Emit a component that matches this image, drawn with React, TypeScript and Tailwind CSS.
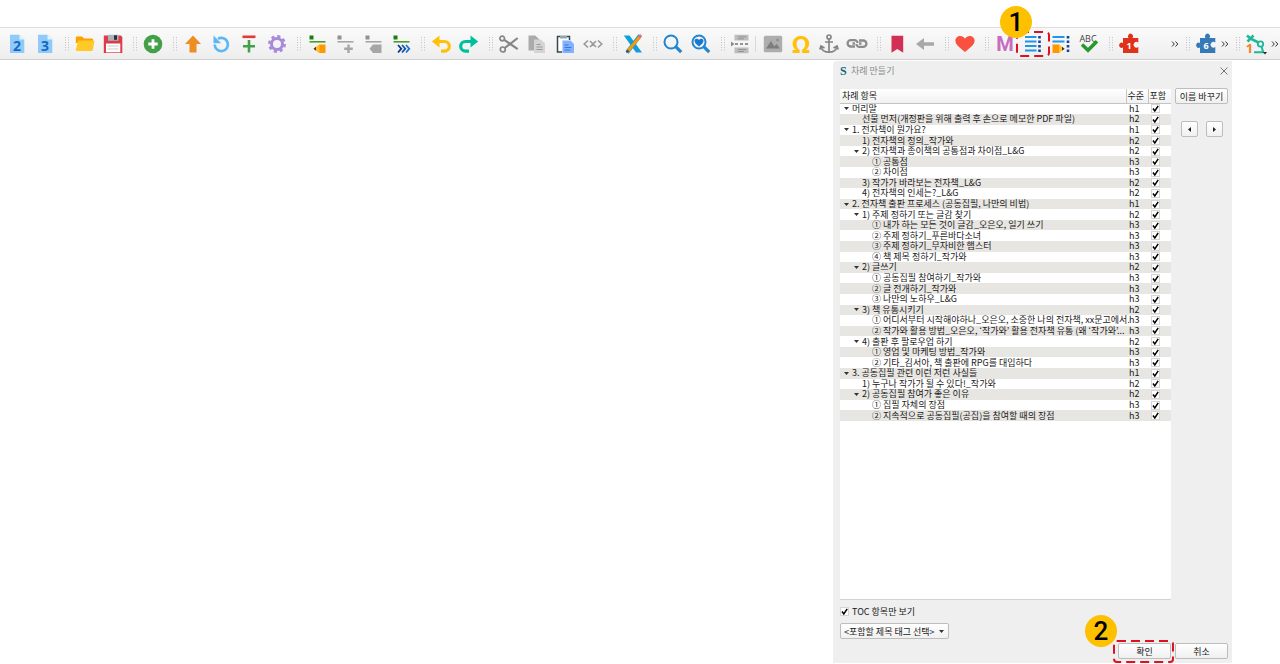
import type { ReactNode } from "react";

type Level = 1 | 2 | 3;

interface TocEntry {
  level: Level;
  text: string;
  open?: boolean;
}

const entries: TocEntry[] = [
  { level: 1, text: "머리말", open: true },
  { level: 2, text: "선물 먼저(개정판을 위해 출력 후 손으로 메모한 PDF 파일)" },
  { level: 1, text: "1. 전자책이 뭔가요?", open: true },
  { level: 2, text: "1) 전자책의 정의_작가와" },
  { level: 2, text: "2) 전자책과 종이책의 공통점과 차이점_L&G", open: true },
  { level: 3, text: "① 공통점" },
  { level: 3, text: "② 차이점" },
  { level: 2, text: "3) 작가가 바라보는 전자책_L&G" },
  { level: 2, text: "4) 전자책의 인세는?_L&G" },
  { level: 1, text: "2. 전자책 출판 프로세스 (공동집필, 나만의 비법)", open: true },
  { level: 2, text: "1) 주제 정하기 또는 글감 찾기", open: true },
  { level: 3, text: "① 내가 하는 모든 것이 글감_오은오, 일기 쓰기" },
  { level: 3, text: "② 주제 정하기_푸른바다소녀" },
  { level: 3, text: "③ 주제 정하기_무자비한 햄스터" },
  { level: 3, text: "④ 책 제목 정하기_작가와" },
  { level: 2, text: "2) 글쓰기", open: true },
  { level: 3, text: "① 공동집필 참여하기_작가와" },
  { level: 3, text: "② 글 전개하기_작가와" },
  { level: 3, text: "③ 나만의 노하우_L&G" },
  { level: 2, text: "3) 책 유통시키기", open: true },
  { level: 3, text: "① 어디서부터 시작해야하나_오은오, 소중한 나의 전자책, xx문고에서..." },
  { level: 3, text: "② 작가와 활용 방법_오은오, ‘작가와’ 활용 전자책 유통 (왜 ‘작가와’..." },
  { level: 2, text: "4) 출판 후 팔로우업 하기", open: true },
  { level: 3, text: "① 영업 및 마케팅 방법_작가와" },
  { level: 3, text: "② 기타_김서아, 책 출판에 RPG를 대입하다" },
  { level: 1, text: "3. 공동집필 관련 이런 저런 사실들", open: true },
  { level: 2, text: "1) 누구나 작가가 될 수 있다!_작가와" },
  { level: 2, text: "2) 공동집필 참여가 좋은 이유", open: true },
  { level: 3, text: "① 집필 자체의 장점" },
  { level: 3, text: "② 지속적으로 공동집필(공집)을 참여할 때의 장점" },
];

const indent: Record<Level, string> = {
  1: "pl-px",
  2: "pl-[11px]",
  3: "pl-[21px]",
};

function Icon({ children }: { children: ReactNode }) {
  return (
    <svg viewBox="0 0 20 20" className="h-5 w-5 shrink-0 overflow-visible" fill="none" aria-hidden="true">
      {children}
    </svg>
  );
}

function Tool({ label, children }: { label: string; children: ReactNode }) {
  return (
    <button type="button" aria-label={label} className="flex h-7 w-7 shrink-0 items-center justify-center">
      <Icon>{children}</Icon>
    </button>
  );
}

function Handle() {
  return (
    <svg viewBox="0 0 12 14" className="h-3.5 w-3 shrink-0" aria-hidden="true">
      <path d="M6.500 0V14M9.500 0V14" stroke="#c4c4c4" strokeDasharray="1 1.500" />
    </svg>
  );
}

function More() {
  return (
    <button type="button" aria-label="더 보기" className="flex h-7 w-[10px] shrink-0 items-center justify-center">
      <svg viewBox="0 0 8 8" className="h-2 w-2" fill="none" stroke="#333" aria-hidden="true">
        <path d="m1 1.500 2.300 2.500L1 6.500M4.500 1.500 6.800 4 4.500 6.500" />
      </svg>
    </button>
  );
}

function NumberedFile({ n }: { n: number }) {
  return (
    <>
      <path d="M3 .7h9.500L17.300 5.500V19H3z" fill="#90caf9" />
      <path d="M12.500.7v4.800h4.800z" fill="#e1f5fe" />
      <text x="10" y="16.500" textAnchor="middle" fontSize="14" fontWeight="700" fill="#1368c4" className="font-['Open_Sans',sans-serif]">
        {n}
      </text>
    </>
  );
}

function Puzzle({ n, color }: { n: number; color: string }) {
  return (
    <>
      <path
        d="M4 4H9.500A2.600 2.600 0 1 1 13.500 4H19.300V8.500A2.900 2.900 0 1 0 19.300 13V19H4V13.500A2.600 2.600 0 1 1 4 9z"
        fill={color}
      />
      <text x="10" y="14.500" textAnchor="middle" fontSize="9" fontWeight="700" fill="#fff" className="font-['Open_Sans',sans-serif]">
        {n}
      </text>
    </>
  );
}

function DashedFrame() {
  return (
    <svg className="h-full w-full overflow-visible" fill="none" aria-hidden="true">
      <rect width="100%" height="100%" rx="3" stroke="#e0101c" strokeWidth="2" strokeDasharray="9 5" />
    </svg>
  );
}

function Badge({ n }: { n: number }) {
  return (
    <span className="flex h-8 w-8 items-center justify-center rounded-full bg-[#ffc000] font-[Roboto,sans-serif] text-[26px] leading-none font-medium text-black">
      {n}
    </span>
  );
}

function Toolbar() {
  return (
    <div
      role="toolbar"
      className="flex h-[33px] items-center border-t border-b border-t-[#dedede] border-b-[#cfcfcf] bg-linear-to-b from-[#fafafa] to-[#eeeeee] pl-[3px]"
    >
      <Tool label="제목 2"><NumberedFile n={2} /></Tool>
      <Tool label="제목 3"><NumberedFile n={3} /></Tool>
      <Handle />
      <Tool label="열기">
        <path d="M.8 3.500Q.8 2.500 1.800 2.500H7l2 2h8q1 0 1 1V9H.8z" fill="#ffa000" />
        <path d="M.8 15.500 3 7.500q.3-1 1.300-1h14q1.400 0 1.100 1l-1.600 8.500q-.2 1-1.200 1H1.800q-1 0-1-1.500z" fill="#ffca28" />
      </Tool>
      <Tool label="저장">
        <path d="M.8 1.500h17l1.500 1.500v16H.8z" fill="#dd3b48" />
        <path d="M5 .8h10.500v6H5z" fill="#a9b3b8" />
        <path d="M11 1.300h3v4.500h-3z" fill="#263238" />
        <path d="M3 9.500h14.300v8.800H3z" fill="#fff" />
        <path d="M4.500 12h11M4.500 15h11" stroke="#ccc" />
      </Tool>
      <Handle />
      <Tool label="추가">
        <circle cx="10" cy="10" r="9.300" fill="#43a047" />
        <path d="M10 5.300v9.400M5.300 10h9.400" stroke="#fff" strokeWidth="2.800" />
      </Tool>
      <Handle />
      <Tool label="위로">
        <path d="M10 1.500 18 10h-4.500v8.500h-7V10H2z" fill="#ef8e20" />
      </Tool>
      <Tool label="새로 고침">
        <path d="M7 4.800A6.600 6.600 0 1 1 3.700 10.500" stroke="#5cb8f5" strokeWidth="2.700" />
        <path d="M2.500 1.500v7.700h7.700z" fill="#5cb8f5" />
      </Tool>
      <Tool label="나누기">
        <path d="M3.500 2.800h13" stroke="#e53935" strokeWidth="2.600" />
        <path d="M10 6v12.500M4 12.300h12" stroke="#43a047" strokeWidth="2.600" />
      </Tool>
      <Tool label="설정">
        <circle cx="10" cy="10" r="5.500" stroke="#a78bda" strokeWidth="3" />
        <circle cx="10" cy="10" r="7.700" stroke="#a78bda" strokeWidth="2.500" strokeDasharray="3.200 2.847" />
      </Tool>
      <Handle />
      <Tool label="줄 편집">
        <path d="M2.500 1.500h4v4h-4z" fill="#1b7a1b" />
        <path d="M2.500 7.800h16" stroke="#43a020" strokeWidth="1.600" />
        <path d="M6.500 14.700 12 10.500h1V19h-1z" fill="#fbc02d" />
        <path d="M12.500 10.500h6V19h-6z" fill="#ff9800" />
        <path d="m6.500 14.700 2.500-2v4z" fill="#4e342e" />
      </Tool>
      <Tool label="줄 추가">
        <path d="M2.500 1.500h4v4h-4z" fill="#919191" />
        <path d="M2.500 7.800h16" stroke="#a6a6a6" strokeWidth="1.600" />
        <path d="M13.500 10.500V19M9.200 14.700h8.600" stroke="#a6a6a6" strokeWidth="2.400" />
      </Tool>
      <Tool label="줄 삭제">
        <path d="M2.500 1.500h4v4h-4z" fill="#919191" />
        <path d="M2.500 7.800h16" stroke="#a6a6a6" strokeWidth="1.600" />
        <path d="M10 10.500h8.500V19H10l-3.500-4.300z" fill="#a6a6a6" />
      </Tool>
      <Tool label="줄 이동">
        <path d="M2.500 1.500h4v4h-4z" fill="#1b7a1b" />
        <path d="M2.500 7.800h16" stroke="#43a020" strokeWidth="1.600" />
        <path d="m7 11 3.300 3.700L7 18.500" stroke="#0d3a8c" strokeWidth="1.800" />
        <path d="m11 11 3.300 3.700-3.300 3.800" stroke="#1155b0" strokeWidth="1.800" />
        <path d="m15 11 3.300 3.700-3.300 3.800" stroke="#1976d2" strokeWidth="1.800" />
      </Tool>
      <Handle />
      <Tool label="실행 취소">
        <path d="M7 7.500h6.500a4.300 4.300 0 0 1 0 9.600H10" stroke="#ffc107" strokeWidth="3.200" />
        <path d="M.8 7.500 8.500 1.500v12z" fill="#ffc107" />
      </Tool>
      <Tool label="다시 실행">
        <path d="M13 7.500H6.500a4.300 4.300 0 0 0 0 9.600H10" stroke="#00bf9c" strokeWidth="3.200" />
        <path d="m19.200 7.500-7.700-6v12z" fill="#00bf9c" />
      </Tool>
      <Handle />
      <Tool label="잘라내기">
        <g stroke="#858585" strokeWidth="1.700">
          <circle cx="3.200" cy="4.500" r="2.300" />
          <circle cx="3.800" cy="15.500" r="2.500" />
          <path d="m5.200 5.800 13.500 9.400M5.800 14 18.700 4" strokeWidth="2.200" />
        </g>
      </Tool>
      <Tool label="복사">
        <path d="M1.500 1.500h6.700L12 5v11.500H1.500z" fill="#ababab" />
        <path d="M7 5.500h7l4 4V19H7z" fill="#d4d4d4" />
        <path d="M9.500 10.500h4M9.500 13h6M9.500 15.500h6" stroke="#999" />
      </Tool>
      <Tool label="붙여넣기">
        <path d="M2.500 2.500h12v15.500h-12z" fill="#fff" />
        <path d="M5 2.500H2.500v15.500H7M12 2.500h2.500V6" stroke="#37474f" strokeWidth="1.500" />
        <path d="M5 1.500h7v3H5z" fill="#90a4ae" />
        <path d="M7.500 6.500h8l3.500 3.500v9H7.500z" fill="#82b1ff" />
        <path d="M9.500 11h4M9.500 13.500h7M9.500 16h6" stroke="#3478db" />
      </Tool>
      <Tool label="태그 지우기">
        <path d="M5 6.500 1.200 10 5 13.500M15 6.500l3.800 3.500-3.800 3.500M7 7l6 6M13 7l-6 6" stroke="#999" strokeWidth="1.600" />
      </Tool>
      <Handle />
      <Tool label="외부 편집기">
        <path d="M.8 1.500H6.500L19 18.500H13z" fill="#0f9fdb" />
        <path d="M17 1.500 4 18.500" stroke="#0f9fdb" strokeWidth="4" />
        <path d="M16.500 3 5 17" stroke="#ff9800" strokeWidth="2.800" />
        <path d="m15.800 3.800 2.300-2.800" stroke="#e57373" strokeWidth="3" />
        <path d="m3 19 1-3.500 2.500 1.700z" fill="#5d4037" />
      </Tool>
      <Handle />
      <Tool label="찾기">
        <circle cx="8" cy="8" r="6.500" stroke="#2086d1" strokeWidth="2" />
        <path d="m12.700 12.700 5.500 5.500" stroke="#2086d1" strokeWidth="3.200" />
      </Tool>
      <Tool label="즐겨 찾기 검색">
        <circle cx="8" cy="8" r="6.500" stroke="#2086d1" strokeWidth="2" />
        <path d="m12.700 12.700 5.500 5.500" stroke="#2086d1" strokeWidth="3.200" />
        <path d="M8 12.500C5 10 3.500 8.700 3.500 6.800c0-2.400 3.200-3 4.500-.8C9.300 3.800 12.500 4.400 12.500 6.800c0 1.900-1.500 3.200-4.500 5.700z" fill="#1976d2" />
      </Tool>
      <Handle />
      <Tool label="분할 표시">
        <path d="M3.500.8h14v5.700h-14zM3.500 13.500h14v5.700h-14z" fill="#bdbdbd" />
        <path d="M7 2.800h8M7 4.800h6M7 15.500h8M7 17.500h6" stroke="#8a8a8a" strokeWidth=".8" />
        <path d="M4 10h15" stroke="#757575" strokeWidth="1.500" strokeDasharray="3 2" />
        <path d="M0 7.500 3.500 10 0 12.500z" fill="#8a8a8a" />
      </Tool>
      <span className="mr-[3px] h-4 w-px bg-[#dadada]" />
      <Tool label="그림">
        <rect x=".8" y="1.800" width="18.400" height="16.400" rx="1.500" fill="#adadad" />
        <path d="m3 14.500 5-7.500 4.500 7.500zM9.500 14.500l4-4.500 3.500 4.500z" fill="#7d7d7d" />
        <circle cx="14.500" cy="6" r="1.300" fill="#8a8a8a" />
      </Tool>
      <Tool label="특수 문자">
        <text x="10" y="19" textAnchor="middle" fontSize="24" fontWeight="700" fill="#ffc107" className="font-['Noto_Sans',sans-serif]">
          Ω
        </text>
      </Tool>
      <Tool label="앵커">
        <g stroke="#858585" strokeWidth="1.700">
          <circle cx="10" cy="3" r="2" />
          <path d="M10 5v13M6 8h8M2 13c1 3.500 4.500 5.200 8 5.200s7-1.700 8-5.200M.8 15.500 2 12l3.500 2M19.200 15.500 18 12l-3.500 2" />
        </g>
      </Tool>
      <Tool label="링크">
        <path d="M8 12.500H3.800a3.200 3.200 0 0 1 0-6.400H7.500a3 3 0 0 1 3 3" stroke="#8c8c8c" strokeWidth="2.300" />
        <path d="M12 6.500h4.200a3.200 3.200 0 0 1 0 6.400H12.500a3 3 0 0 1-3-3M5.500 9.500h2.500M12 9.500h2.500" stroke="#8c8c8c" strokeWidth="2.300" />
      </Tool>
      <Handle />
      <Tool label="책갈피">
        <path d="M4.500 1.800h11.700v17L10.300 15l-5.800 3.800z" fill="#d32f54" />
      </Tool>
      <Tool label="뒤로">
        <path d="M1 10 9 4v4.200h10v3.600H9V16z" fill="#a8a8a8" />
      </Tool>
      <Handle />
      <Tool label="후원">
        <path d="M10 18C3 12.500.4 9.800.4 6.500.4 1.500 7.500 0 10 4.800 12.500 0 19.600 1.500 19.600 6.500 19.600 9.800 17 12.500 10 18z" fill="#f9503f" />
      </Tool>
      <Handle />
      <Tool label="메타데이터">
        <text x="10" y="17" textAnchor="middle" fontSize="20" fontWeight="700" fill="#c76dc0" className="font-[Roboto,sans-serif]">
          M
        </text>
      </Tool>
      <div className="relative shrink-0">
        <Tool label="차례 만들기">
          <path d="M2 3h11.500M2 7.500h11.500M2 12h11.500M2 16.500h11.500" stroke="#2196e8" strokeWidth="2" />
          <path d="M16.500 2v16.500" stroke="#0d47a1" strokeWidth="2.600" strokeDasharray="2.500 2" />
        </Tool>
        <div className="pointer-events-none absolute -inset-x-0.5 inset-y-0.5">
          <DashedFrame />
        </div>
        <div className="pointer-events-none absolute -top-6 -left-[19px]">
          <Badge n={1} />
        </div>
      </div>
      <Tool label="차례 편집">
        <path d="M1.500 3h12M1.500 7.500h12" stroke="#2196e8" strokeWidth="2" />
        <path d="M1.500 10.500h7V19h-7z" fill="#ff9800" />
        <path d="M8 10.500 13.500 14.700 8 19z" fill="#ffc52e" />
        <path d="m11 12.800 2.700 1.900-2.700 2z" fill="#4e342e" />
        <path d="M17 2v16.500" stroke="#0d47a1" strokeWidth="2.600" strokeDasharray="2.500 2" />
      </Tool>
      <Tool label="맞춤법 검사">
        <text x="9" y="7.500" textAnchor="middle" fontSize="9" fill="#444" className="font-['Open_Sans',sans-serif]">
          ABC
        </text>
        <path d="m3 10.500 6 5.700 9-9" stroke="#25992a" strokeWidth="3.500" />
      </Tool>
      <Handle />
      <div className="flex flex-1 justify-between">
        <Tool label="플러그인 1"><Puzzle n={1} color="#df321b" /></Tool>
        <More />
      </div>
      <Handle />
      <Tool label="플러그인 6"><Puzzle n={6} color="#3579b7" /></Tool>
      <More />
      <Handle />
      <Tool label="자동화">
        <g stroke="#1db89a" strokeWidth="1.800">
          <path d="M1 1.500 4.500 4.500 7.500 1.500M1.500 7.500 4.500 4.500 12.500 8.500" strokeWidth="2.600" />
          <circle cx="14.500" cy="10" r="2.700" />
          <path d="m15.500 12.500 1.500 5M8 18.300h10" strokeWidth="2" />
        </g>
        <text x="3.500" y="19" textAnchor="middle" fontSize="13" fontWeight="700" fill="#f5821f" className="font-['Open_Sans',sans-serif]">
          1
        </text>
        <path d="M17 18h4l-2 2.500z" fill="#222" />
      </Tool>
      <More />
    </div>
  );
}

function Check({ label, id }: { label?: string; id?: string }) {
  return (
    <span className="grid h-[9px] w-[9px]">
      <input
        id={id}
        type="checkbox"
        defaultChecked
        aria-label={label}
        className="peer col-start-1 row-start-1 h-[9px] w-[9px] appearance-none border border-[#d5d5d5] bg-white"
      />
      <svg
        viewBox="0 0 9 9"
        className="pointer-events-none col-start-1 row-start-1 hidden h-[9px] w-[9px] peer-checked:block"
        fill="none"
        aria-hidden="true"
      >
        <path d="M2 4.500 3.800 7 7.200 1.800" stroke="#000" strokeWidth="1.500" />
      </svg>
    </span>
  );
}

const buttonClass =
  "flex h-4 items-center justify-center rounded-[2px] border border-[#bdbdbd] bg-linear-to-b from-white to-[#f0f0f0] whitespace-nowrap";

function TocTable() {
  return (
    <table className="h-[332px] w-full table-fixed border-collapse text-left leading-[10px]">
      <thead>
        <tr className="h-[14px] bg-linear-to-b from-white to-[#f1f1f1]">
          <th scope="col" className="border-b border-[#c4c4c4] p-0 pl-0.5 font-normal">차례 항목</th>
          <th scope="col" className="w-[22px] border-b border-l border-[#c4c4c4] p-0 pl-px font-normal whitespace-nowrap">수준</th>
          <th scope="col" className="w-[23px] border-b border-l border-[#c4c4c4] p-0 pl-px font-normal whitespace-nowrap">포함</th>
        </tr>
      </thead>
      <tbody>
        {entries.map((entry) => (
          <tr key={entry.text} className="even:bg-[#e8e6e2]">
            <td className="p-0">
              <div className={`-mr-[3px] flex h-[10px] items-center ${indent[entry.level]}`}>
                <span className="flex w-[11px] shrink-0 justify-center">
                  {entry.open && (
                    <svg viewBox="0 0 5 3" className="h-[3px] w-[5px]" aria-hidden="true">
                      <path d="M0 0h5L2.500 3z" fill="#333" />
                    </svg>
                  )}
                </span>
                <span className="min-w-0 overflow-hidden leading-[14px] whitespace-nowrap">{entry.text}</span>
              </div>
            </td>
            <td className="p-0 pl-[3px]">
              <div className="h-[10px]">h{entry.level}</div>
            </td>
            <td className="p-0 pl-[3px]">
              <Check label={`${entry.text} 포함`} />
            </td>
          </tr>
        ))}
      </tbody>
    </table>
  );
}

function TocDialog() {
  return (
    <section
      role="dialog"
      aria-labelledby="toc-title"
      className="mt-px mr-12 mb-px ml-auto flex w-[399px] max-w-full flex-1 flex-col rounded-tl bg-[#efefef] pr-1 pb-1 pl-[7px] font-['Noto_Sans_CJK_KR',sans-serif] text-[9px] leading-[11px] text-[#1a1a1a]"
    >
      <header className="flex h-[27px] items-start pt-1">
        <span aria-hidden="true" className="w-[11px] font-['Liberation_Serif',serif] text-[12px] leading-[13px] font-bold text-[#12647a]">
          S
        </span>
        <h1 id="toc-title" className="text-[#8c8c8c]">차례 만들기</h1>
        <button type="button" aria-label="닫기" className="mt-0.5 ml-auto">
          <svg viewBox="0 0 8 8" className="h-2 w-2" stroke="#666" strokeWidth=".9" aria-hidden="true">
            <path d="m.5.5 7 7M7.500.5l-7 7" />
          </svg>
        </button>
      </header>

      <div className="flex flex-1 gap-1">
        <div className="mt-px flex-1 border-b border-[#d2d2d2] bg-white">
          <TocTable />
        </div>
        <div className="w-[53px] shrink-0">
          <button type="button" className={`${buttonClass} w-full`}>이름 바꾸기</button>
          <div className="mt-[17px] flex justify-center gap-2">
            <button type="button" aria-label="수준 올리기" className={`${buttonClass} w-[17px]`}>
              <svg viewBox="0 0 3 5" className="h-[5px] w-[3px]" aria-hidden="true">
                <path d="M3 0v5L0 2.500z" fill="#222" />
              </svg>
            </button>
            <button type="button" aria-label="수준 내리기" className={`${buttonClass} w-[17px]`}>
              <svg viewBox="0 0 3 5" className="h-[5px] w-[3px]" aria-hidden="true">
                <path d="M0 0v5l3-2.500z" fill="#222" />
              </svg>
            </button>
          </div>
        </div>
      </div>

      <div className="flex items-center gap-[3px] pt-1.5">
        <Check id="toc-only" />
        <label htmlFor="toc-only">TOC 항목만 보기</label>
      </div>
      <div className="mt-1.5 grid w-[109px] items-center">
        <select
          aria-label="포함할 제목 태그"
          className="col-start-1 row-start-1 h-4 appearance-none rounded-[2px] border border-[#bdbdbd] bg-linear-to-b from-white to-[#f0f0f0] pl-[3px]"
        >
          <option>&lt;포함할 제목 태그 선택&gt;</option>
        </select>
        <svg
          viewBox="0 0 5 3"
          className="pointer-events-none col-start-1 row-start-1 mr-[5px] h-[3px] w-[5px] justify-self-end"
          aria-hidden="true"
        >
          <path d="M0 0h5L2.500 3z" fill="#333" />
        </svg>
      </div>
      <footer className="mt-1 flex justify-end gap-1">
        <div className="relative">
          <button type="button" className={`${buttonClass} w-[53px]`}>확인</button>
          <div className="pointer-events-none absolute -top-0.5 -right-0.5 -bottom-[3px] -left-1">
            <DashedFrame />
          </div>
          <div className="pointer-events-none absolute -top-7 -left-[33px]">
            <Badge n={2} />
          </div>
        </div>
        <button type="button" className={`${buttonClass} w-[53px]`}>취소</button>
      </footer>
    </section>
  );
}

export default function App() {
  return (
    <main className="flex min-h-screen flex-col overflow-hidden bg-white pt-[27px]">
      <Toolbar />
      <TocDialog />
    </main>
  );
}
